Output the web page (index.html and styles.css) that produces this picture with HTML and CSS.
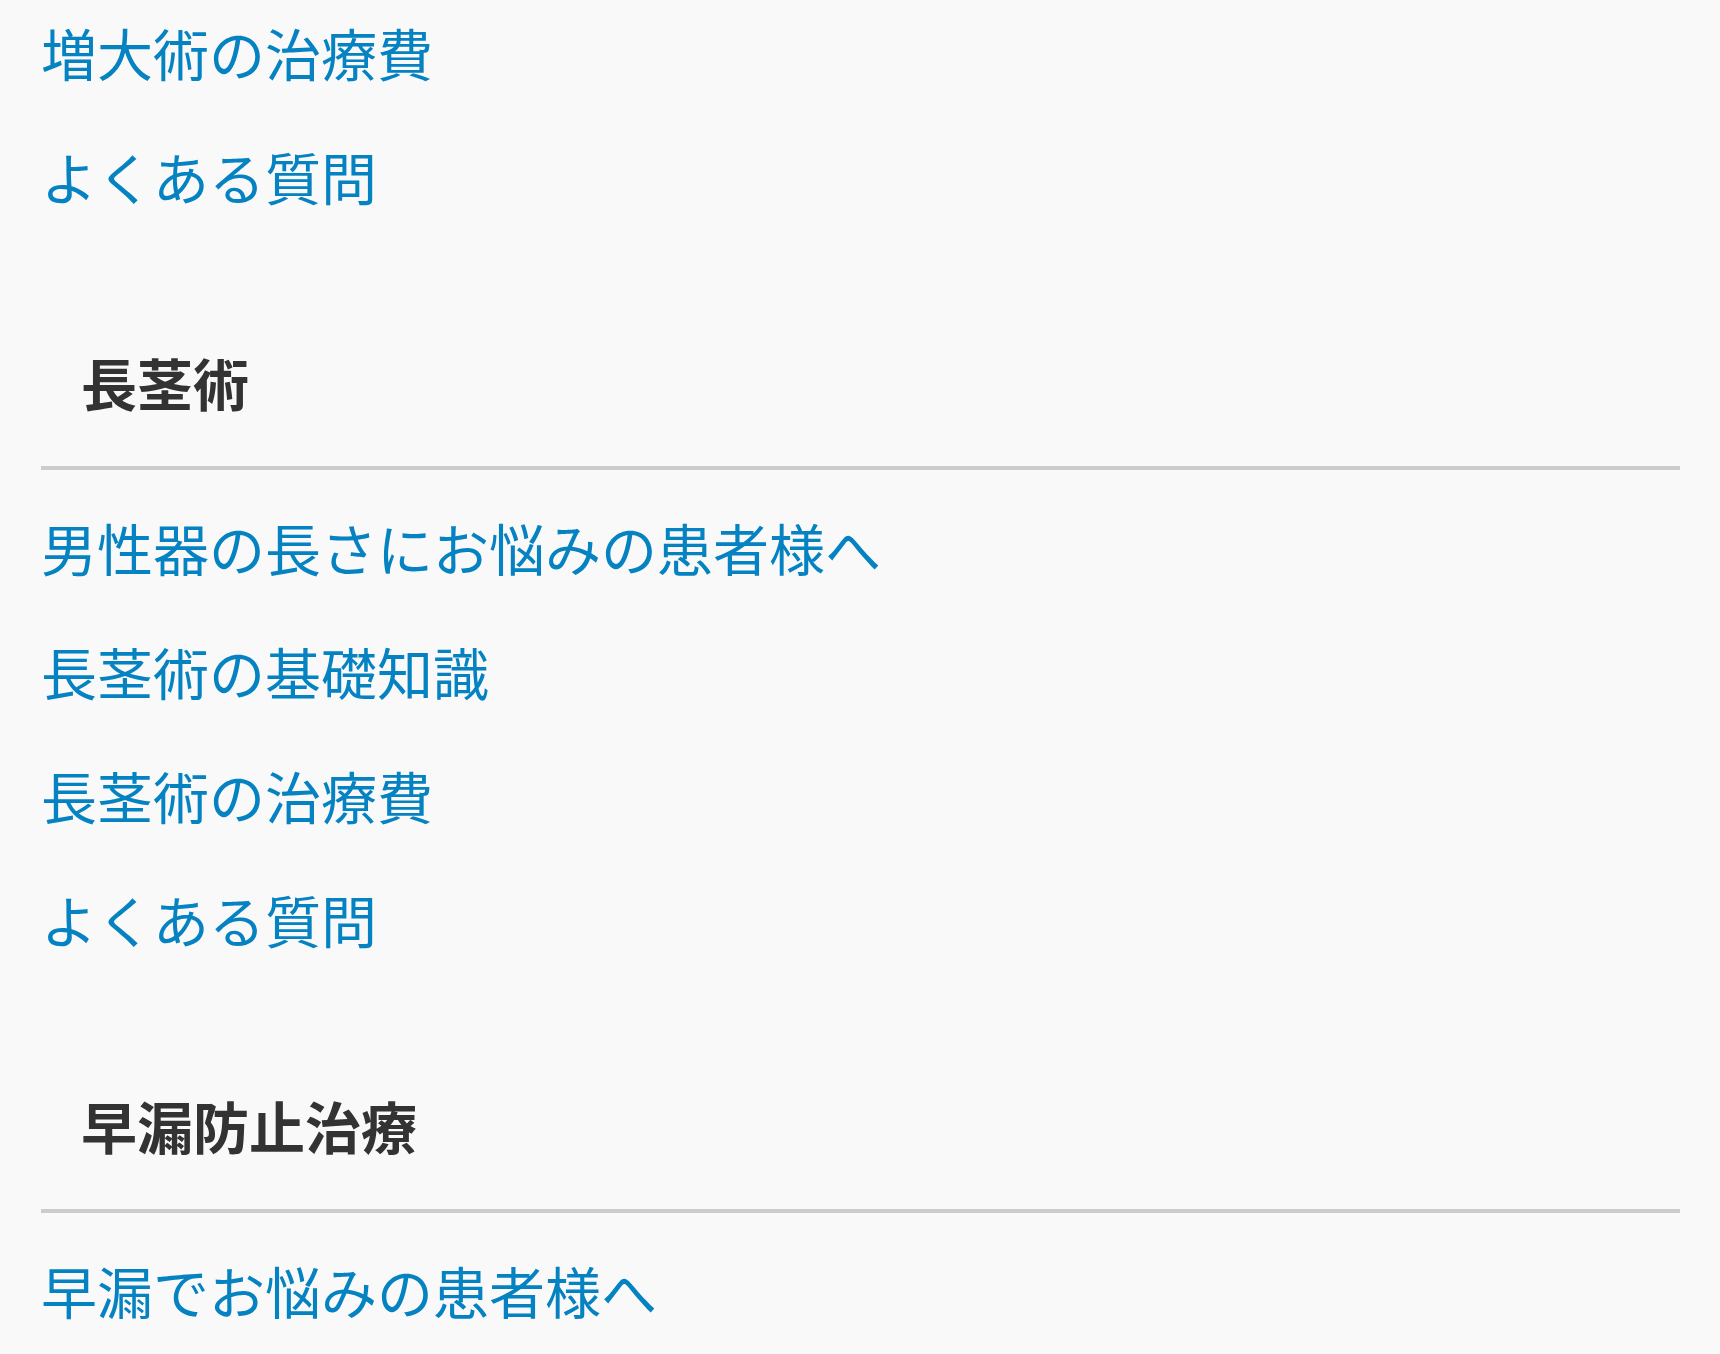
FILE: index.html
```html
<!DOCTYPE html>
<html lang="ja">
<head>
    <meta charset="UTF-8">
    <title>メニュー</title>
    <link rel="stylesheet" href="styles.css">
</head>
<body>
<nav class="menu">
    <ul class="menu-list menu-list--first">
        <li><a href="#">増大術の治療費</a></li>
        <li><a href="#">よくある質問</a></li>
    </ul>

    <h2 class="menu-title">長茎術</h2>
    <ul class="menu-list">
        <li><a href="#">男性器の長さにお悩みの患者様へ</a></li>
        <li><a href="#">長茎術の基礎知識</a></li>
        <li><a href="#">長茎術の治療費</a></li>
        <li><a href="#">よくある質問</a></li>
    </ul>

    <h2 class="menu-title">早漏防止治療</h2>
    <ul class="menu-list">
        <li><a href="#">早漏でお悩みの患者様へ</a></li>
    </ul>
</nav>
</body>
</html>
```

FILE: styles.css
```css
html, body {
    margin: 0;
    background-color: #f9f9f9;
}

body {
    font-family: "Noto Sans CJK JP", "Noto Sans", sans-serif;
    overflow: hidden;
}

.menu {
    padding: 0 40px 0 41px;
}

.menu-list {
    list-style: none;
    margin: 0;
    padding: 0;
}

.menu-list--first {
    margin-top: -5px;
}

/* each row stays 124px tall, text sits a little above centre */
.menu-list li a {
    display: block;
    font-size: 56px;
    line-height: 114px;
    padding-bottom: 10px;
    color: #0582c1;
    text-decoration: none;
}

.menu-title {
    margin: 101px 0 20px;
    padding: 0 0 46px 40px;
    font-size: 56px;
    line-height: 76px;
    font-weight: bold;
    color: #333333;
    border-bottom: 4px solid #cccccc;
}
```
